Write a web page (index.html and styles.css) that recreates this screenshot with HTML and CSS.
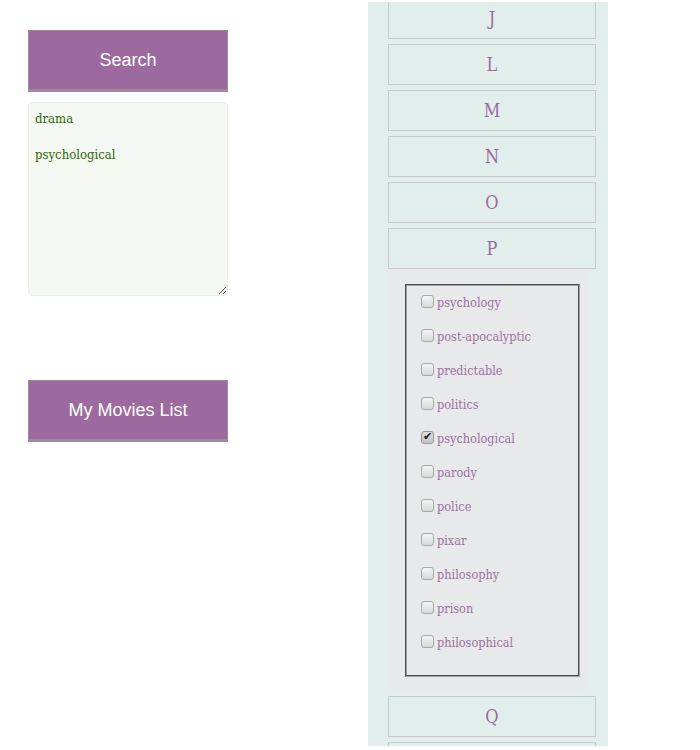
FILE: index.html
```html
<!DOCTYPE html>
<html>
<head>
<meta charset="utf-8">
<link rel="stylesheet" href="styles.css">
</head>
<body>
<div class="page">
  <div class="left">
    <button class="btn">Search</button>
    <textarea class="query">drama

psychological</textarea>
    <button class="btn btn-list">My Movies List</button>
  </div>
  <div class="panel">
    <div class="panel-inner">
      <div class="letter">J</div>
      <div class="letter">L</div>
      <div class="letter">M</div>
      <div class="letter">N</div>
      <div class="letter">O</div>
      <div class="letter letter-open">P</div>
      <div class="tags">
        <fieldset class="tag-box">
          <label class="tag"><input type="checkbox"><span>psychology</span></label>
          <label class="tag"><input type="checkbox"><span>post-apocalyptic</span></label>
          <label class="tag"><input type="checkbox"><span>predictable</span></label>
          <label class="tag"><input type="checkbox"><span>politics</span></label>
          <label class="tag"><input type="checkbox" checked><span>psychological</span></label>
          <label class="tag"><input type="checkbox"><span>parody</span></label>
          <label class="tag"><input type="checkbox"><span>police</span></label>
          <label class="tag"><input type="checkbox"><span>pixar</span></label>
          <label class="tag"><input type="checkbox"><span>philosophy</span></label>
          <label class="tag"><input type="checkbox"><span>prison</span></label>
          <label class="tag"><input type="checkbox"><span>philosophical</span></label>
        </fieldset>
      </div>
      <div class="letter">Q</div>
      <div class="letter"></div>
    </div>
  </div>
</div>
</body>
</html>
```

FILE: styles.css
```css
html, body {
  margin: 0;
  padding: 0;
  background: #ffffff;
}

.page {
  display: flex;
  align-items: flex-start;
  padding-top: 2px;
}

.left {
  width: 200px;
  margin-left: 28px;
  margin-top: 28px;
  display: flex;
  flex-direction: column;
}

.btn {
  display: block;
  width: 200px;
  height: 62px;
  margin: 0;
  padding: 0;
  background: #9c6a9e;
  border: 1px solid #998a9c;
  border-bottom: 3px solid #998a9c;
  color: #ffffff;
  font-family: "Liberation Sans", Arial, sans-serif;
  font-size: 18px;
  text-align: center;
  cursor: pointer;
}

.btn-list {
  margin-top: 84px;
}

.query {
  display: block;
  box-sizing: border-box;
  width: 200px;
  height: 194px;
  margin: 10px 0 0 0;
  padding: 7px 6px 5px 6px;
  background: #f5f7f2;
  border: 1px solid #eceee9;
  border-radius: 4px;
  color: #2d6a0a;
  font-family: "DejaVu Serif Condensed", "DejaVu Serif", serif;
  font-size: 13px;
  line-height: 18px;
  outline: none;
}

.panel {
  width: 240px;
  height: 744px;
  margin-left: 140px;
  background: #e2eeeb;
  overflow: hidden;
}

.panel-inner {
  margin-top: -4px;
  padding: 0 12px 0 20px;
}

.letter {
  box-sizing: border-box;
  height: 41px;
  margin-bottom: 5px;
  border: 1px solid #c9c9c9;
  color: #9b6a9e;
  font-family: "DejaVu Serif Condensed", "DejaVu Serif", serif;
  font-size: 18px;
  line-height: 39px;
  text-align: center;
}

.letter-open {
  margin-bottom: 0;
}

.tags {
  width: 200px;
  box-sizing: border-box;
  background: #e8e9eb;
  padding: 15px 8px 14px 17px;
  margin-bottom: 5px;
}

.tag-box {
  margin: 0;
  padding: 0 0 15px 10px;
  border: 2px groove #a0a0a0;
  min-width: 0;
}

.tag {
  display: flex;
  align-items: center;
  height: 34px;
  color: #a070a2;
  font-family: "DejaVu Serif Condensed", "DejaVu Serif", serif;
  font-size: 12.6px;
}

.tag span {
  position: relative;
  top: -1px;
}

.tag input {
  -webkit-appearance: none;
  appearance: none;
  box-sizing: border-box;
  width: 13px;
  height: 13px;
  margin: 0 3px 0 4px;
  position: relative;
  top: -2px;
  border: 1px solid #a8a8a8;
  border-radius: 3px;
  background: linear-gradient(#f4f4f4, #d9d9d9);
}

.tag input:checked {
  background: linear-gradient(#d8d8d8, #c4c4c4);
  border-color: #9a9a9a;
}

.tag input:checked::after {
  content: "\2714";
  position: absolute;
  left: 1px;
  top: -2px;
  font-family: "DejaVu Sans", sans-serif;
  font-size: 11px;
  color: #222;
}
```
